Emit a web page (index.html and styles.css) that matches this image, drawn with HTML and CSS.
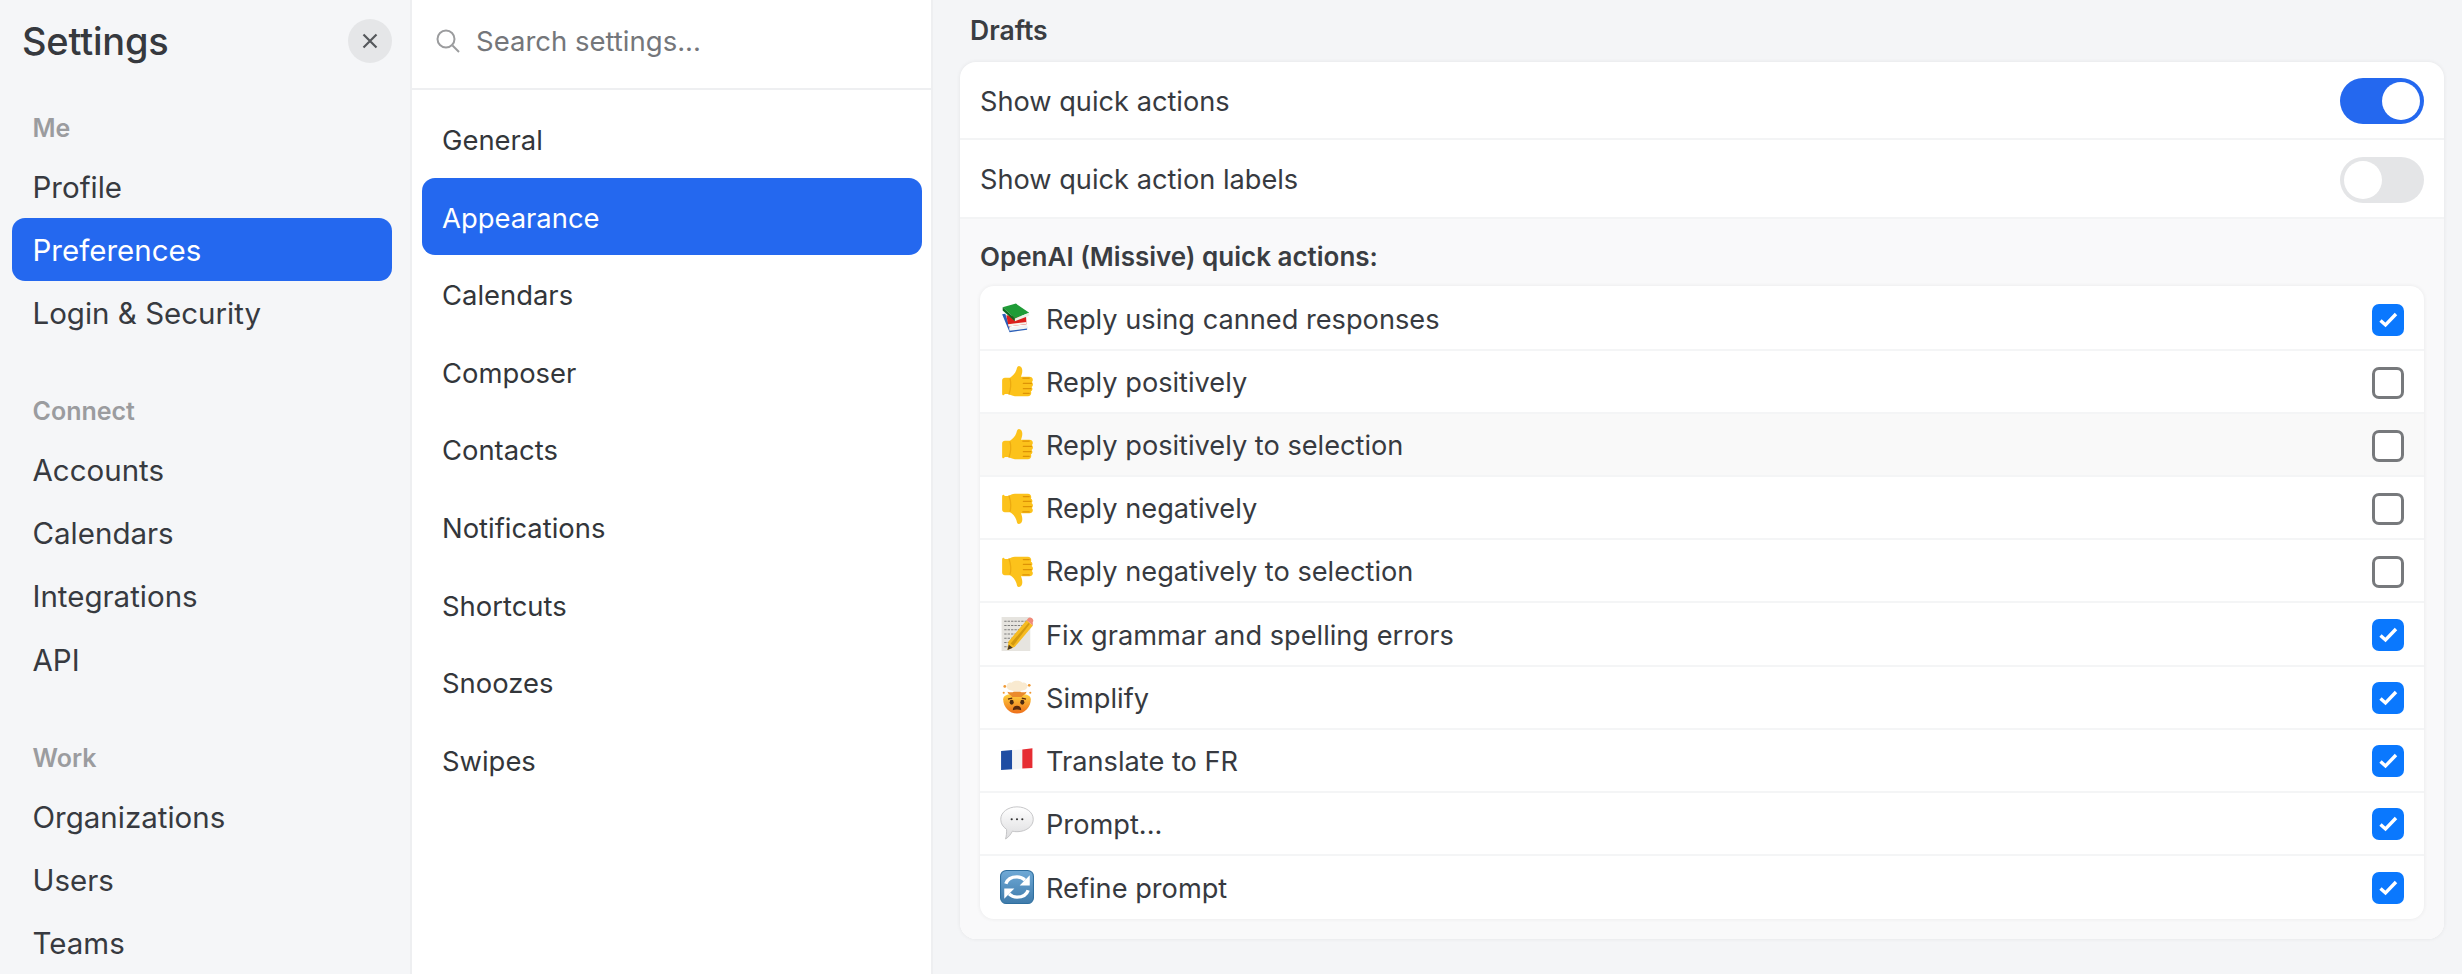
FILE: index.html
```html
<!DOCTYPE html>
<html lang="en">
<head>
<meta charset="utf-8">
<title>Settings</title>
<link rel="stylesheet" href="styles.css">
</head>
<body>
<svg class="defs" width="0" height="0" aria-hidden="true">
  <defs>
    <linearGradient id="faceGrad" x1="0" y1="0" x2="0" y2="1"><stop offset="0" stop-color="#ffd23f"/><stop offset="1" stop-color="#ee6f1a"/></linearGradient>
    <linearGradient id="bubbleGrad" x1="0" y1="0" x2="0" y2="1"><stop offset="0" stop-color="#ffffff"/><stop offset="1" stop-color="#dcdcde"/></linearGradient>
    <linearGradient id="refreshGrad" x1="0" y1="0" x2="0" y2="1"><stop offset="0" stop-color="#6fa9d6"/><stop offset="1" stop-color="#3f7bab"/></linearGradient>
    <symbol id="thumb" viewBox="0 0 32 32">
      <path fill="#fcc21b" d="M2 14.500c0-1.600 1.200-2.500 2.600-2.500h4.800c2.400-1.400 4.900-4 6-7.200.5-1.600.6-3.800 2.400-3.800 2.200 0 3.200 2.300 3.200 4.500 0 2.200-.7 4.100-1.300 5.600h8c1.900 0 3.200 1.100 3.200 2.800 0 1-.4 1.700-1 2.200.7.500 1.100 1.300 1.100 2.200 0 1-.5 1.900-1.300 2.300.5.500.8 1.200.8 2 0 1-.6 1.900-1.500 2.300.3.400.4.900.4 1.400 0 1.800-1.300 3-3.100 3H14c-2.500 0-4.200-1.200-6-1.900H4.600C3 29.500 2 28.300 2 26.800z"/>
      <path fill="none" stroke="#dd9306" stroke-width="1.200" stroke-linecap="round" d="M21.500 12.300h6M22 17.300h7.500M22 22.300h7M22 26.800h5.500"/>
      <path fill="none" stroke="#ecaa10" stroke-width="1.200" stroke-linecap="round" d="M9.500 13c1 4 .5 10-1 14.500"/>
    </symbol>
    <symbol id="books" viewBox="0 0 32 32">
      <path fill="#2b5fb8" d="M2 11.500l3-.5 4.500 14 16-2v3L9 28.500z"/>
      <path fill="#f1f3f4" d="M8.500 24l17-2.500v3.500L9 27z"/>
      <path fill="#dc1f1b" d="M6 12.500l18.500 1.500.5 7L8 23z"/>
      <path fill="#f6f2ea" d="M7.500 21l17.500-2.200v2L8 23z"/>
      <path fill="#1f9c37" d="M2.500 5L15 1.500 27.500 10 14 15.600z"/>
      <path fill="#0e6a20" d="M2.500 5L14 15.600V18L2.500 8z"/>
      <path fill="#eaf2e6" d="M14 15.600L27.500 10v3L14 18z"/>
    </symbol>
    <symbol id="memo" viewBox="0 0 32 32">
      <rect x="1.500" y="0" width="27" height="32" fill="#e6e4df"/>
      <path fill="none" stroke="#6b6b6b" stroke-width=".8" stroke-dasharray="2.200 1" d="M4 4h22M4 8h19M4 12h15M4 16h11M4 20h9M4 24h8M4 28h5"/>
      <path fill="#f6bb21" d="M8 23L25 3l6 5-17 20-7 3z"/>
      <path fill="#f08a7a" d="M25 3l1.500-1.800c1-1 2.500-1 3.700 0s1.600 2.500.6 3.800L31 8z"/>
      <path fill="#d39a10" d="M10 25L27 5.500l1 1L12.500 27z"/>
      <path fill="#4a3a28" d="M8.300 26L7 31l5-2z"/>
    </symbol>
    <symbol id="mind" viewBox="0 0 32 32">
      <path fill="url(#faceGrad)" d="M3 18c0-3 3-5 13-5s13 2 13 5c0 7-5.500 13.500-13 13.500S3 25 3 18z"/>
      <path fill="#f9ead0" d="M7 8C4.500 5 8 1.500 11 2.500c2-2.500 8-2.500 10 0 3-1 6.500 2.500 4 5.500-1.500 2-5 1.500-6 3h-6C12 9.500 8.500 10 7 8z"/>
      <path fill="#ea8a2c" d="M7 11c2.500 1 5 .5 6 0h6c1 .5 3.500 1 6 0-1 3-3.500 3-4.500 5h-9C10.500 14 8 14 7 11z"/>
      <circle cx="4.500" cy="6" r="1.300" fill="#f09a35"/><circle cx="27.500" cy="5" r="1.300" fill="#f09a35"/><circle cx="3.500" cy="12" r="1" fill="#f09a35"/><circle cx="28.500" cy="12" r="1" fill="#f09a35"/>
      <ellipse cx="11" cy="21" rx="1.900" ry="2.300" fill="#4b2a12"/>
      <ellipse cx="21" cy="21" rx="1.900" ry="2.300" fill="#4b2a12"/>
      <path fill="#5a2a0e" d="M12 28.500c0-2.800 1.800-4.200 4-4.200s4 1.400 4 4.200c-2.500-1-5.500-1-8 0z"/>
      <path fill="none" stroke="#5a2a0e" stroke-width="1.100" d="M7.500 18l4-1M24.500 18l-4-1"/>
    </symbol>
    <symbol id="flag" viewBox="0 0 32 32">
      <path fill="#1f4da3" d="M1 7.500l10.500-.8v18L1 25.500z"/>
      <path fill="#f4f4f4" d="M11.500 6.700L21 6v18l-9.500.7z"/>
      <path fill="#e62d33" d="M21 6l9.500-1v18.500L21 24z"/>
    </symbol>
    <symbol id="bubble" viewBox="0 0 32 32">
      <path fill="url(#bubbleGrad)" stroke="#bdbdbf" stroke-width=".8" d="M16 .8c8.500 0 15.300 5 15.300 11.700S24.500 24.200 16 24.200c-1.500 0-3-.2-4.300-.5-1.500 2.800-3.700 6-6.500 7.300.8-2.500 1.100-6 1-9C2.800 19.700.7 16.500.7 12.500.7 5.800 7.500.8 16 .8z"/>
      <circle cx="11" cy="12.500" r="1" fill="#333"/><circle cx="16" cy="12.500" r="1" fill="#333"/><circle cx="21" cy="12.500" r="1" fill="#333"/>
    </symbol>
    <symbol id="refresh" viewBox="0 0 32 32">
      <rect x=".5" y=".5" width="31" height="31" rx="5.500" fill="url(#refreshGrad)" stroke="#2f6f9f"/>
      <path fill="none" stroke="#fff" stroke-width="3.200" d="M5.500 13C7 8.500 11 6.500 16 6.500c3 0 5.500 1 7.500 3M26.500 19C25 23.500 21 25.500 16 25.500c-3 0-5.500-1-7.500-3"/>
      <path fill="#fff" d="M28 5v9.500h-9.500zM4 27v-9.500h9.500z"/>
    </symbol>
    <symbol id="tick" viewBox="0 0 32 32">
      <path fill="none" stroke="#fff" stroke-width="3.400" d="M8.500 16.500l5 4.500L24 10"/>
    </symbol>
  </defs>
</svg>
<div class="app">
  <aside class="sidebar">
    <header class="side-head">
      <h1 class="side-title">Settings</h1>
      <button class="close" aria-label="Close">
        <svg width="16" height="16" viewBox="0 0 16 16"><path d="M1.500 1.500l13 13M14.500 1.500l-13 13" stroke="#55585c" stroke-width="2.200" fill="none"/></svg>
      </button>
    </header>
    <nav class="side-nav">
      <div class="group">
        <div class="group-label">Me</div>
        <a class="side-item">Profile</a>
        <a class="side-item is-active">Preferences</a>
        <a class="side-item">Login &amp; Security</a>
      </div>
      <div class="group">
        <div class="group-label">Connect</div>
        <a class="side-item">Accounts</a>
        <a class="side-item">Calendars</a>
        <a class="side-item">Integrations</a>
        <a class="side-item">API</a>
      </div>
      <div class="group">
        <div class="group-label">Work</div>
        <a class="side-item">Organizations</a>
        <a class="side-item">Users</a>
        <a class="side-item">Teams</a>
      </div>
    </nav>
  </aside>
  <section class="middle">
    <div class="search">
      <svg class="search-icon" width="24" height="24" viewBox="0 0 24 24"><circle cx="10" cy="10" r="8.500" fill="none" stroke="#9b9c9e" stroke-width="2"/><path d="M16.500 16.500l6.500 6.500" stroke="#9b9c9e" stroke-width="2" fill="none"/></svg>
      <span class="search-text">Search settings...</span>
    </div>
    <nav class="mid-nav">
      <a class="mid-item">General</a>
      <a class="mid-item is-active">Appearance</a>
      <a class="mid-item">Calendars</a>
      <a class="mid-item">Composer</a>
      <a class="mid-item">Contacts</a>
      <a class="mid-item">Notifications</a>
      <a class="mid-item">Shortcuts</a>
      <a class="mid-item">Snoozes</a>
      <a class="mid-item">Swipes</a>
    </nav>
  </section>
  <main class="content">
    <h2 class="section-title">Drafts</h2>
    <div class="card">
      <div class="setting"><span>Show quick actions</span><span class="toggle is-on"><span class="knob"></span></span></div>
      <div class="setting"><span>Show quick action labels</span><span class="toggle"><span class="knob"></span></span></div>
      <div class="sub">
        <div class="sub-title">OpenAI (Missive) quick actions:</div>
        <div class="list">
          <div class="row"><svg class="emoji"><use href="#books"/></svg><span class="row-text">Reply using canned responses</span><span class="check is-on"><svg viewBox="0 0 32 32"><use href="#tick"/></svg></span></div>
          <div class="row"><svg class="emoji"><use href="#thumb"/></svg><span class="row-text">Reply positively</span><span class="check"></span></div>
          <div class="row is-hover"><svg class="emoji"><use href="#thumb"/></svg><span class="row-text">Reply positively to selection</span><span class="check"></span></div>
          <div class="row"><svg class="emoji flip"><use href="#thumb"/></svg><span class="row-text">Reply negatively</span><span class="check"></span></div>
          <div class="row"><svg class="emoji flip"><use href="#thumb"/></svg><span class="row-text">Reply negatively to selection</span><span class="check"></span></div>
          <div class="row"><svg class="emoji"><use href="#memo"/></svg><span class="row-text">Fix grammar and spelling errors</span><span class="check is-on"><svg viewBox="0 0 32 32"><use href="#tick"/></svg></span></div>
          <div class="row"><svg class="emoji"><use href="#mind"/></svg><span class="row-text">Simplify</span><span class="check is-on"><svg viewBox="0 0 32 32"><use href="#tick"/></svg></span></div>
          <div class="row"><svg class="emoji"><use href="#flag"/></svg><span class="row-text">Translate to FR</span><span class="check is-on"><svg viewBox="0 0 32 32"><use href="#tick"/></svg></span></div>
          <div class="row"><svg class="emoji"><use href="#bubble"/></svg><span class="row-text">Prompt...</span><span class="check is-on"><svg viewBox="0 0 32 32"><use href="#tick"/></svg></span></div>
          <div class="row"><svg class="emoji"><use href="#refresh"/></svg><span class="row-text">Refine prompt</span><span class="check is-on"><svg viewBox="0 0 32 32"><use href="#tick"/></svg></span></div>
        </div>
      </div>
    </div>
  </main>
</div>
</body>
</html>
```

FILE: styles.css
```css
* { box-sizing: border-box; }
html, body { margin: 0; height: 974px; overflow: hidden; }
body {
  font-family: Inter, "Liberation Sans", sans-serif;
  color: #373a40;
  background: #f4f5f7;
  -webkit-font-smoothing: antialiased;
}
.defs { display: block; height: 0; }
.app { display: flex; height: 974px; }

.sidebar {
  width: 412px;
  flex: none;
  background: #f5f6f8;
  border-right: 2px solid #eeeff1;
  padding: 19px 18px 0 12px;
}
.side-head {
  display: flex;
  align-items: center;
  justify-content: space-between;
  height: 44px;
  padding-left: 10px;
}
.side-title { margin: 0; font-size: 38px; font-weight: 500; letter-spacing: -.2px; color: #36393e; }
.close {
  width: 44px;
  height: 44px;
  border: 0;
  padding: 0;
  border-radius: 50%;
  background: #e5e6e8;
  display: flex;
  align-items: center;
  justify-content: center;
}
.side-nav { display: flex; flex-direction: column; gap: 38.500px; padding-top: 36.500px; }
.group-label {
  height: 55px;
  line-height: 56px;
  padding-left: 20.500px;
  font-size: 25px;
  font-weight: 600;
  color: #9b9c9f;
}
.side-item {
  display: block;
  height: 63.300px;
  line-height: 65px;
  padding-left: 20.500px;
  font-size: 29.500px;
  color: #373a40;
  border-radius: 13px;
}
.side-item.is-active, .mid-item.is-active { background: #2468ef; color: #fff; }

.middle {
  width: 521px;
  flex: none;
  background: #fff;
  border-right: 2px solid #eeeff1;
}
.search {
  display: flex;
  align-items: center;
  gap: 16px;
  height: 90px;
  padding: 0 0 6px 24px;
  border-bottom: 2px solid #eeeff1;
}
.search-text { font-size: 27.500px; color: #74767a; }
.search-icon { flex: none; }
.mid-nav { padding: 10px 9px 0 10px; }
.mid-item {
  display: block;
  height: 77.600px;
  line-height: 81px;
  padding-left: 20px;
  font-size: 27.400px;
  color: #33363a;
  border-radius: 13px;
}

.content { flex: 1; padding: 0 18px 0 27px; min-width: 0; }
.section-title { margin: 0; height: 62px; line-height: 61px; padding-left: 10px; font-size: 26.500px; font-weight: 600; color: #3a3d42; }
.card {
  background: #fff;
  border-radius: 16px;
  box-shadow: 0 0 4px rgba(0,0,0,.07);
  overflow: hidden;
}
.setting {
  display: flex;
  align-items: center;
  justify-content: space-between;
  height: 78px;
  padding: 2px 20px 0 20px;
  font-size: 27.200px;
  border-bottom: 2px solid #f3f4f5;
}
.setting + .setting { height: 79px; }
.toggle {
  width: 84px;
  height: 46px;
  border-radius: 23px;
  background: #e4e5e7;
  padding: 4px;
  display: flex;
}
.toggle.is-on { background: #2468ef; justify-content: flex-end; }
.knob { width: 38px; height: 38px; border-radius: 50%; background: #fff; }
.sub { background: #f9f9fa; padding: 0 20px 20px; }
.sub-title { height: 67px; line-height: 76px; font-size: 26px; font-weight: 600; color: #3a3d42; }
.list {
  background: #fff;
  border-radius: 14px;
  box-shadow: 0 0 4px rgba(0,0,0,.07);
  overflow: hidden;
  padding-top: 2px;
}
.row {
  display: flex;
  align-items: center;
  height: 63.100px;
  padding: 2px 20px 0;
  font-size: 27.200px;
  border-bottom: 2px solid #f4f5f6;
}
.row:last-child { border-bottom: 0; }
.row.is-hover { background: #f9f9f9; }
.emoji { width: 34px; height: 34px; flex: none; margin-right: 12px; margin-top: -2px; }
.emoji.flip { transform: rotate(180deg) scaleX(-1); }
.row-text { flex: 1; }
.check {
  width: 32px;
  height: 32px;
  flex: none;
  border: 3px solid #77797c;
  border-radius: 7px;
  background: #fff;
}
.check.is-on { border: 0; background: #0a78fe; }
.check svg { display: block; width: 32px; height: 32px; }
```
